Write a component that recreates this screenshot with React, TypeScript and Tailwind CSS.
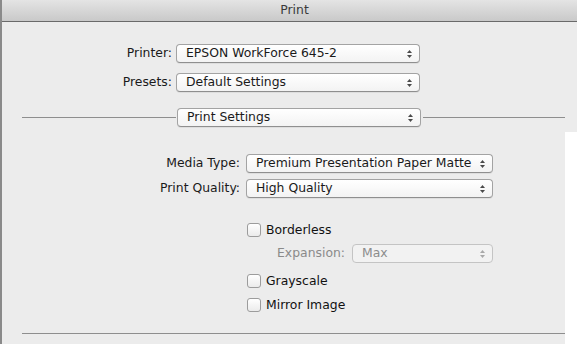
import React from "react";

const font = { fontFamily: '"DejaVu Sans", "Liberation Sans", sans-serif' };

function Arrows({ disabled }: { disabled?: boolean }) {
  const c = disabled ? "#a8a8a8" : "#4a4a4a";
  return (
    <svg width="7" height="10" viewBox="0 0 7 10" className="shrink-0">
      <path d="M3.5 1 L6 4 L1 4 Z" fill={c} />
      <path d="M3.5 9 L6 6 L1 6 Z" fill={c} />
    </svg>
  );
}

function Popup({
  text,
  width,
  disabled,
}: {
  text: string;
  width: string;
  disabled?: boolean;
}) {
  return (
    <div
      className={`${width} h-[19px] shrink-0 flex items-center justify-between pl-[9px] pr-[6px] rounded-[4px] border ${
        disabled
          ? "border-[#c4c4c4] bg-[#f2f2f2] text-[#8c8c8c]"
          : "border-[#a3a3a3] border-b-[#8f8f8f] bg-gradient-to-b from-white to-[#f3f3f3] text-[#1a1a1a] shadow-[0_1px_0_rgba(0,0,0,0.06)]"
      }`}
    >
      <span className="leading-none whitespace-nowrap">{text}</span>
      <Arrows disabled={disabled} />
    </div>
  );
}

function Check({ label }: { label: string }) {
  return (
    <div className="flex items-center h-[14px] ml-[245px]">
      <div className="w-[14px] h-[14px] shrink-0 rounded-[3px] border border-[#9c9c9c] bg-gradient-to-b from-white to-[#ebebeb]" />
      <span className="ml-[5px] leading-none text-[#111] whitespace-nowrap">{label}</span>
    </div>
  );
}

export default function App() {
  return (
    <div
      className="w-[577px] h-[344px] overflow-hidden bg-[#ececec] border-l-2 border-[#8a8a8a] flex flex-col text-[12.4px]"
      style={font}
    >
      <div className="h-[22px] shrink-0 flex items-center justify-center pl-[10px] bg-gradient-to-b from-[#e4e4e4] to-[#c9c9c9] border-b border-[#6a6a6a] text-[#3a3a3a]">
        Print
      </div>
      <div className="flex flex-1">
        <div className="flex-1 flex flex-col">
          <div className="flex items-center mt-[22px]">
            <div className="w-[170px] text-right text-[#1a1a1a]">Printer:</div>
            <div className="ml-[4px]">
              <Popup text="EPSON WorkForce 645-2" width="w-[244px]" />
            </div>
          </div>
          <div className="flex items-center mt-[10px]">
            <div className="w-[170px] text-right text-[#1a1a1a]">Presets:</div>
            <div className="ml-[4px]">
              <Popup text="Default Settings" width="w-[244px]" />
            </div>
          </div>
          <div className="flex items-center mt-[16px] pl-[20px]">
            <div className="w-[154px] h-px bg-[#8e8e8e]" />
            <div className="ml-[1px]">
              <Popup text="Print Settings" width="w-[244px]" />
            </div>
            <div className="flex-1 ml-[2px] h-px bg-[#8e8e8e]" />
          </div>
          <div className="flex items-center mt-[27px]">
            <div className="w-[238px] text-right text-[#1a1a1a]">Media Type:</div>
            <div className="ml-[6px]">
              <Popup text="Premium Presentation Paper Matte" width="w-[247px]" />
            </div>
          </div>
          <div className="flex items-center mt-[6px]">
            <div className="w-[238px] text-right text-[#1a1a1a]">Print Quality:</div>
            <div className="ml-[6px]">
              <Popup text="High Quality" width="w-[247px]" />
            </div>
          </div>
          <div className="mt-[25px]">
            <Check label="Borderless" />
          </div>
          <div className="flex items-center mt-[7px]">
            <div className="w-[343px] text-right text-[#8a8a8a]">Expansion:</div>
            <div className="ml-[7px]">
              <Popup text="Max" width="w-[141px]" disabled />
            </div>
          </div>
          <div className="mt-[11px]">
            <Check label="Grayscale" />
          </div>
          <div className="mt-[10px]">
            <Check label="Mirror Image" />
          </div>
          <div className="mt-[21px] ml-[20px] h-px bg-[#8e8e8e]" />
        </div>
        <div className="w-[12px] shrink-0 mt-[110px] bg-white" />
      </div>
    </div>
  );
}
